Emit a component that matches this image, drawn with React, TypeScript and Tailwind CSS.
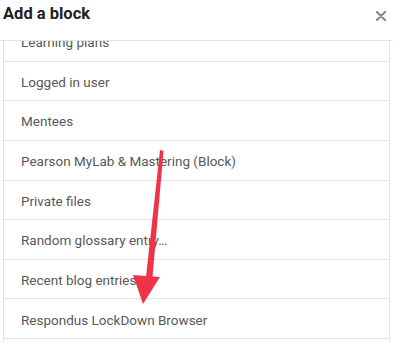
const blocks = [
  "Learning plans",
  "Logged in user",
  "Mentees",
  "Pearson MyLab & Mastering (Block)",
  "Private files",
  "Random glossary entry…",
  "Recent blog entries",
  "Respondus LockDown Browser",
  "",
]

export default function App() {
  return (
    <div className="relative w-[393px] h-[342px] overflow-hidden bg-white font-['Roboto',Arial,sans-serif]">
      <div className="flex items-center justify-between h-[41px] border-b border-[#e3e3e3] pl-[3px] pr-[7px]">
        <h2 className="text-[16.5px] font-bold text-[#1d2125] -mt-[11px]">Add a block</h2>
        <svg width="10" height="10" viewBox="0 0 10 10" className="-mt-[9px]">
          <path d="M1 1L9 9M9 1L1 9" stroke="#8a8a8a" strokeWidth="2.2" strokeLinecap="round" />
        </svg>
      </div>
      <div className="mx-[3px] w-[387px] h-[301px] overflow-hidden border-x border-[#e3e3e3]">
        <div className="-mt-[19px]">
          {blocks.map((b, i) => (
            <div key={i} className="h-[39.65px] flex items-center pl-[17px] border-b border-[#e3e3e3] text-[13.5px] text-[#595959] pt-[2px]">
              {b}
            </div>
          ))}
        </div>
      </div>
      <svg className="absolute inset-0 pointer-events-none" width="393" height="342" viewBox="0 0 393 342">
        <polygon points="160,150 163.5,151 152.5,277 146,277" fill="#f03348" />
        <polygon points="133,275 160,277 143,304" fill="#f03348" />
      </svg>
    </div>
  )
}
